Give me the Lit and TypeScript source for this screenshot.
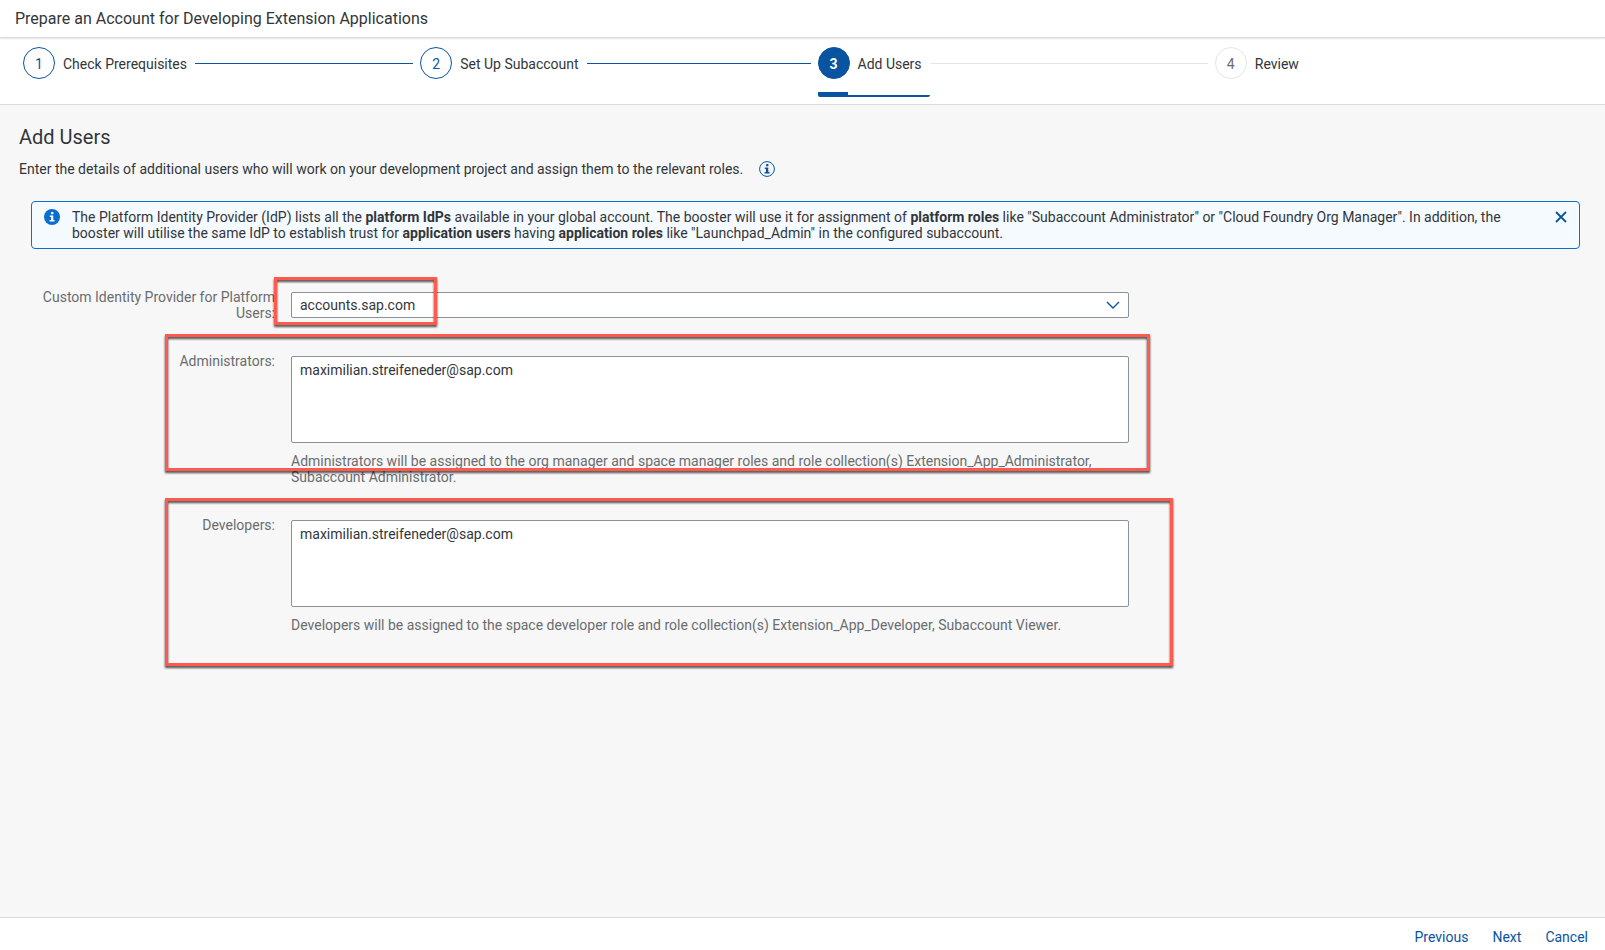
import { LitElement, html, css, svg, nothing } from "lit";
import { customElement, property, state } from "lit/decorators.js";
import { classMap } from "lit/directives/class-map.js";

type StepState = "done" | "current" | "upcoming";

interface Step {
  label: string;
  state: StepState;
}

const STEPS: Step[] = [
  { label: "Check Prerequisites", state: "done" },
  { label: "Set Up Subaccount", state: "done" },
  { label: "Add Users", state: "current" },
  { label: "Review", state: "upcoming" },
];

const infoGlyph = svg`
  <rect x="7" y="3" width="2.4" height="2.2" rx="0.4"></rect>
  <path d="M5.8 6.6h3.5v4.5h1.2v1.3H5.6v-1.3h1.4V7.9H5.8z"></path>
`;

@customElement("wizard-steps")
export class WizardSteps extends LitElement {
  static styles = css`
    :host {
      display: block;
      background: #fff;
      border-bottom: 1px solid #d9d9d9;
    }
    .steps {
      display: grid;
      grid-template-columns: repeat(4, 1fr);
      margin: 0;
      padding: 9px 8px 7px;
      list-style: none;
    }
    .step {
      display: flex;
      align-items: flex-start;
      padding-left: 15px;
    }
    .link {
      display: flex;
      align-items: center;
      gap: 8px;
      height: 50px;
      padding: 0 8px 18px 0;
      box-sizing: border-box;
      color: #32363a;
      font-size: 14px;
      line-height: 16px;
      text-decoration: none;
      white-space: nowrap;
    }
    .number,
    .name {
      padding-top: 2px;
    }
    .number {
      display: grid;
      place-items: center;
      width: 32px;
      height: 32px;
      box-sizing: border-box;
      border: 1px solid #0854a0;
      border-radius: 50%;
      color: #0854a0;
    }
    .current .link {
      background:
        linear-gradient(#0854a0, #0854a0) left bottom / 30px 5px no-repeat,
        linear-gradient(#0854a0, #0854a0) left bottom / 100% 2px no-repeat;
      border-radius: 2px;
    }
    .current .number {
      background: #0854a0;
      color: #fff;
      font-weight: 700;
    }
    .upcoming .number {
      border-color: #e5e5e5;
      color: #6a6d70;
    }
    .line {
      flex: 1;
      height: 1px;
      margin: 16px -8px 0 0;
      background: #0854a0;
    }
    .current .line {
      background: #e5e5e5;
    }
  `;

  @property({ attribute: false }) steps: Step[] = [];

  render() {
    return html`
      <ol class="steps">
        ${this.steps.map(
          (step, i) => html`
            <li class=${classMap({ step: true, [step.state]: true })}>
              <a
                class="link"
                href="#step-${i + 1}"
                aria-current=${step.state === "current" ? "step" : nothing}
              >
                <span class="number">${i + 1}</span>
                <span class="name">${step.label}</span>
              </a>
              ${i < this.steps.length - 1 ? html`<span class="line"></span>` : nothing}
            </li>
          `
        )}
      </ol>
    `;
  }
}

@customElement("app-root")
export class AppRoot extends LitElement {
  static styles = css`
    :host {
      display: flex;
      flex-direction: column;
      min-height: 100vh;
      background: #f7f7f7;
      color: #32363a;
      font-family: Roboto, "Liberation Sans", sans-serif;
      font-size: 14px;
      line-height: 16px;
    }
    .header {
      position: relative;
      padding: 9px 15px 8px;
      background: #fff;
      border-bottom: 1px solid #d9d9d9;
      box-shadow: 0 1px 2px rgba(0, 0, 0, 0.1);
    }
    .title {
      margin: 0;
      font-size: 16px;
      font-weight: 400;
      line-height: 20px;
    }
    .content {
      flex: 1;
      padding: 20px 25px 20px 31px;
    }
    .intro {
      margin-left: -12px;
    }
    .heading {
      margin: 0;
      font-size: 20px;
      font-weight: 400;
      line-height: 24px;
    }
    .lead {
      display: flex;
      align-items: center;
      gap: 16px;
      margin: 12px 0 24px;
    }
    .lead-text {
      margin: 0;
    }
    .icon-button {
      display: grid;
      place-items: center;
      flex: none;
      width: 16px;
      height: 16px;
      padding: 0;
      border: 0;
      background: none;
      color: #0854a0;
      cursor: pointer;
    }
    .icon {
      display: block;
      width: 16px;
      height: 16px;
      flex: none;
    }
    .message {
      display: flex;
      align-items: flex-start;
      gap: 12px;
      padding: 7px 10px 7px 12px;
      border: 1px solid #0a6ed1;
      border-radius: 4px;
      background: #f5faff;
    }
    .message-text {
      flex: 1;
      margin: 0;
      padding-right: 28px;
    }
    .form {
      display: flex;
      flex-direction: column;
      gap: 32px;
      margin-top: 40px;
    }
    .row {
      position: relative;
      display: grid;
      grid-template-columns: 244fr 838fr 435fr;
      column-gap: 16px;
      align-items: start;
    }
    .label {
      color: #6a6d70;
      text-align: right;
    }
    .combo {
      display: grid;
      align-items: center;
      margin: 3px 0;
    }
    .select,
    .chevron {
      grid-area: 1 / 1;
    }
    .select,
    .area {
      box-sizing: border-box;
      width: 100%;
      border: 1px solid #89919a;
      border-radius: 2px;
      background: #fff;
      color: #32363a;
      font: inherit;
    }
    .select {
      appearance: none;
      height: 26px;
      padding: 0 32px 0 8px;
    }
    .chevron {
      justify-self: end;
      width: 14px;
      height: 8px;
      margin-right: 9px;
      color: #0854a0;
      pointer-events: none;
    }
    .area {
      display: block;
      height: 87px;
      margin: 3px 0 0;
      padding: 5px 8px;
      resize: none;
    }
    .hint {
      margin: 10px 0 0;
      color: #6a6d70;
    }
    .mark {
      position: absolute;
      border: 3px solid #ff5a4d;
      filter: drop-shadow(0 2px 1px rgba(0, 0, 0, 0.7));
      pointer-events: none;
    }
    .mark-idp {
      left: 243px;
      top: -12px;
      width: 157px;
      height: 42px;
    }
    .mark-admins {
      left: 134px;
      right: 430px;
      top: -19px;
      bottom: 14px;
    }
    .mark-devs {
      left: 134px;
      right: 407px;
      top: -19px;
      bottom: -33px;
    }
    .footer {
      display: flex;
      justify-content: flex-end;
      gap: 24px;
      padding: 11px 17px 5px;
      border-top: 1px solid #d9d9d9;
      background: #fff;
    }
    .action {
      padding: 0;
      border: 0;
      background: none;
      color: #0854a0;
      font: inherit;
      cursor: pointer;
    }
  `;

  @state() private messageOpen = true;

  private renderArea(id: string, label: string, hint: string, mark: string) {
    return html`
      <div class="row">
        <label class="label" for=${id}>${label}</label>
        <div>
          <textarea
            class="area"
            id=${id}
            spellcheck="false"
            aria-describedby="${id}-hint"
            .value=${"maximilian.streifeneder@sap.com"}
          ></textarea>
          <p class="hint" id="${id}-hint">${hint}</p>
        </div>
        <span class="mark ${mark}"></span>
      </div>
    `;
  }

  render() {
    return html`
      <header class="header">
        <h1 class="title">Prepare an Account for Developing Extension Applications</h1>
      </header>
      <wizard-steps .steps=${STEPS}></wizard-steps>
      <main class="content">
        <div class="intro">
          <h2 class="heading">Add Users</h2>
          <div class="lead">
            <p class="lead-text">
              Enter the details of additional users who will work on your development project and
              assign them to the relevant roles.
            </p>
            <button class="icon-button" type="button" aria-label="More information">
              <svg class="icon" viewBox="0 0 16 16" fill="currentColor">
                <circle cx="8" cy="8" r="7.4" fill="none" stroke="currentColor"></circle>
                ${infoGlyph}
              </svg>
            </button>
          </div>
        </div>
        ${this.messageOpen
          ? html`
              <div class="message" role="note">
                <svg class="icon" viewBox="0 0 16 16" fill="#fff" aria-hidden="true">
                  <circle cx="8" cy="8" r="8" fill="#0a6ed1"></circle>
                  ${infoGlyph}
                </svg>
                <p class="message-text">
                  The Platform Identity Provider (IdP) lists all the <b>platform IdPs</b> available
                  in your global account. The booster will use it for assignment of
                  <b>platform roles</b> like "Subaccount Administrator" or "Cloud Foundry Org
                  Manager". In addition, the booster will utilise the same IdP to establish trust
                  for <b>application users</b> having <b>application roles</b> like
                  "Launchpad_Admin" in the configured subaccount.
                </p>
                <button
                  class="icon-button"
                  type="button"
                  aria-label="Close"
                  @click=${() => (this.messageOpen = false)}
                >
                  <svg class="icon" viewBox="0 0 16 16" stroke="currentColor" stroke-width="1.8">
                    <path d="M3 3l10 10M13 3L3 13"></path>
                  </svg>
                </button>
              </div>
            `
          : nothing}
        <form class="form">
          <div class="row">
            <label class="label" for="idp">Custom Identity Provider for Platform Users:</label>
            <div class="combo">
              <select class="select" id="idp">
                <option>accounts.sap.com</option>
              </select>
              <svg
                class="chevron"
                viewBox="0 0 14 8"
                fill="none"
                stroke="currentColor"
                stroke-width="1.4"
                aria-hidden="true"
              >
                <path d="M1 1l6 6 6-6"></path>
              </svg>
            </div>
            <span class="mark mark-idp"></span>
          </div>
          ${this.renderArea(
            "administrators",
            "Administrators:",
            "Administrators will be assigned to the org manager and space manager roles and role collection(s) Extension_App_Administrator, Subaccount Administrator.",
            "mark-admins"
          )}
          ${this.renderArea(
            "developers",
            "Developers:",
            "Developers will be assigned to the space developer role and role collection(s) Extension_App_Developer, Subaccount Viewer.",
            "mark-devs"
          )}
        </form>
      </main>
      <footer class="footer">
        <button class="action" type="button">Previous</button>
        <button class="action" type="button">Next</button>
        <button class="action" type="button">Cancel</button>
      </footer>
    `;
  }
}
